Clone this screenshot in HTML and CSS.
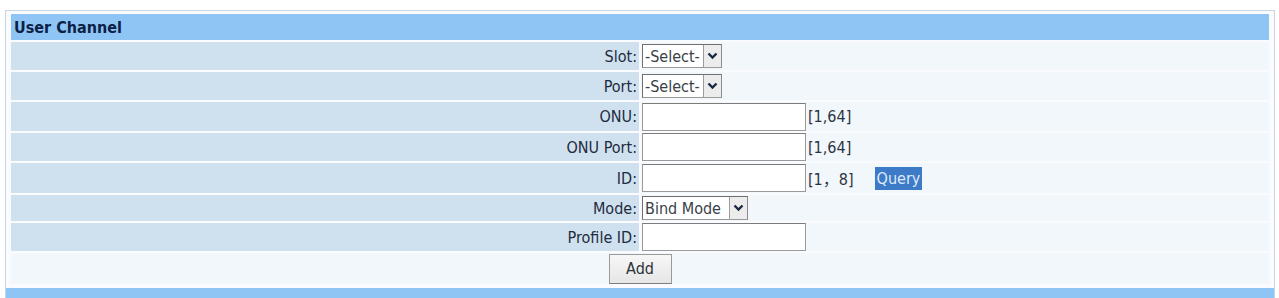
FILE: index.html
```html
<!DOCTYPE html>
<html>
<head>
<meta charset="utf-8">
<link rel="stylesheet" href="styles.css">
</head>
<body>
<div class="panel">
  <div class="head">User Channel</div>
  <div class="row h28">
    <div class="label">Slot:</div>
    <div class="value">
      <span class="select w80"><span class="sel-text">-Select-</span><span class="arrow"><svg width="11" height="8" viewBox="0 0 11 8"><polyline points="1.5,1.5 5.5,5.5 9.5,1.5" fill="none" stroke="#1b2a44" stroke-width="2.4"/></svg></span></span>
    </div>
  </div>
  <div class="row h28">
    <div class="label">Port:</div>
    <div class="value">
      <span class="select w80"><span class="sel-text">-Select-</span><span class="arrow"><svg width="11" height="8" viewBox="0 0 11 8"><polyline points="1.5,1.5 5.5,5.5 9.5,1.5" fill="none" stroke="#1b2a44" stroke-width="2.4"/></svg></span></span>
    </div>
  </div>
  <div class="row h29">
    <div class="label">ONU:</div>
    <div class="value"><span class="input"></span><span class="hint">[1,64]</span></div>
  </div>
  <div class="row h28">
    <div class="label">ONU Port:</div>
    <div class="value"><span class="input"></span><span class="hint">[1,64]</span></div>
  </div>
  <div class="row h30">
    <div class="label">ID:</div>
    <div class="value"><span class="input"></span><span class="hint">[1，8]</span><span class="query">Query</span></div>
  </div>
  <div class="row h26">
    <div class="label">Mode:</div>
    <div class="value">
      <span class="select w106"><span class="sel-text">Bind Mode</span><span class="arrow"><svg width="11" height="8" viewBox="0 0 11 8"><polyline points="1.5,1.5 5.5,5.5 9.5,1.5" fill="none" stroke="#1b2a44" stroke-width="2.4"/></svg></span></span>
    </div>
  </div>
  <div class="row h28">
    <div class="label">Profile ID:</div>
    <div class="value"><span class="input"></span></div>
  </div>
  <div class="addrow"><span class="btn">Add</span></div>
  <div class="foot"></div>
</div>
</body>
</html>
```
FILE: styles.css
```css
html, body {
  margin: 0;
  padding: 0;
  background: #ffffff;
}
body {
  font-family: "DejaVu Sans Condensed", "DejaVu Sans", "Noto Sans CJK SC", sans-serif;
  font-size: 16px;
  color: #1f2b3e;
  height: 298px;
  overflow: hidden;
}
.panel {
  margin: 10px 0 0 5px;
  width: 1258px;
  border: 1px solid #c6d6e5;
  border-bottom: none;
  padding: 3px 5px 0 5px;
  display: flex;
  flex-direction: column;
  gap: 2px;
  background: #f9fbfe;
}
.head {
  height: 26px;
  background: #8ec5f5;
  color: #0c2145;
  font-weight: bold;
  display: flex;
  align-items: center;
  padding-left: 3px;
}
.row {
  display: grid;
  grid-template-columns: 628px 1fr;
  column-gap: 2px;
}
.h26 { height: 26px; }
.h28 { height: 28px; }
.h29 { height: 29px; }
.h30 { height: 30px; }
.label {
  background: #cfe1ef;
  display: flex;
  align-items: center;
  justify-content: flex-end;
  padding-right: 2px;
}
.value {
  background: #f2f7fb;
  display: flex;
  align-items: center;
  padding-left: 1px;
}
.select {
  height: 24px;
  box-sizing: border-box;
  border: 1px solid #6f6f6f;
  border-right-color: #8a8a8a;
  border-bottom-color: #9a9a9a;
  background: #ffffff;
  display: flex;
  align-items: stretch;
  color: #3a3f47;
}
.w80 { width: 80px; }
.w106 { width: 106px; }
.sel-text {
  flex: 1;
  display: flex;
  align-items: center;
  padding-left: 2px;
  white-space: nowrap;
  overflow: hidden;
}
.arrow {
  width: 17px;
  background: #ececec;
  border-left: 1px solid #9c9c9c;
  display: flex;
  align-items: center;
  justify-content: center;
}
.input {
  width: 164px;
  height: 28px;
  box-sizing: border-box;
  background: #ffffff;
  border: 1px solid #9a9a9a;
  border-top-color: #7c7c7c;
}
.hint {
  margin-left: 2px;
  color: #2c3442;
}
.query {
  margin-left: 21px;
  background: #3d7bc8;
  color: #dfeafa;
  padding: 1px 2px;
  line-height: 21px;
}
.addrow {
  height: 31px;
  background: #f2f7fb;
  display: flex;
  align-items: center;
  justify-content: center;
}
.btn {
  width: 63px;
  height: 30px;
  box-sizing: border-box;
  border: 1px solid #9a9a9a;
  border-bottom-color: #7d7d7d;
  background: linear-gradient(#f7f7f7, #e6e6e6);
  display: flex;
  align-items: center;
  justify-content: center;
  color: #2a2f38;
}
.foot {
  margin: 2px -5px 0;
  height: 12px;
  background: #8ec5f5;
}
```
